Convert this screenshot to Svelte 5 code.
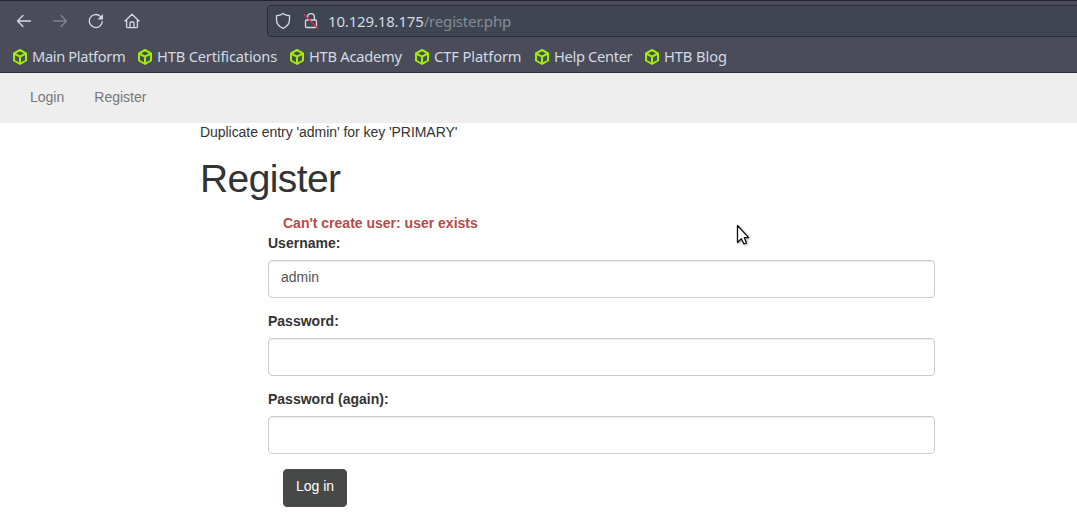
<script>
  const bookmarks = [
    { label: 'Main Platform', width: 125, tracking: -0.36 },
    { label: 'HTB Certifications', width: 152, tracking: -0.17 },
    { label: 'HTB Academy', width: 125, tracking: -0.25 },
    { label: 'CTF Platform', width: 120, tracking: -0.1 },
    { label: 'Help Center', width: 110, tracking: -0.33 },
    { label: 'HTB Blog', width: 90, tracking: -0.08 }
  ];
  let username = $state('admin');
  let password = $state('');
  let repeated = $state('');
</script>

<div class="screen">
  <header class="chrome">
    <div class="toolbar">
      <div class="buttons">
        <svg width="16" height="16" viewBox="0 0 16 16"><path d="M1.5 8H14.5M7 2.500 1.500 8 7 13.500" /></svg>
        <svg class="dim" width="16" height="16" viewBox="0 0 16 16"><path d="M1.500 8h13M9 2.500 14.500 8 9 13.500" /></svg>
        <svg width="16" height="16" viewBox="0 0 16 16"><path d="M14.3 8.6A6.5 6.5 0 1 1 12.4 3.4" /><path class="solid" d="M15 1v5.4H9.6z" /></svg>
        <svg width="16" height="16" viewBox="0 0 16 16"><path d="M1 8 8 1.2 15 8M2.600 6.800v6.700q0 1.200 1.200 1.200h8.400q1.200 0 1.200-1.200V6.800M6 14.500V10q0-1 1-1h2q1 0 1 1v4.500" /></svg>
      </div>
      <div class="address">
        <svg width="16" height="18" viewBox="0 0 16 18"><path d="M8 1.400C6 3 3.800 3.600 1.500 3.700V7.500C1.500 11.800 4 14.700 8 16.300C12 14.700 14.500 11.800 14.500 7.500V3.700C12.200 3.600 10 3 8 1.400Z" /></svg>
        <svg class="lock" width="16" height="18" viewBox="0 0 16 18"><path d="M4.600 8V5a3.400 3.400 0 0 1 6.800 0v3M3.500 8h9q1 0 1 1v5.500q0 1-1 1h-9q-1 0-1-1V9q0-1 1-1Z" /><path class="slash" d="M1 2.500 14.500 16" /></svg>
        <span class="url">10.129.18.175<span>/register.php</span></span>
      </div>
    </div>
    <div class="bookmarks">
      {#each bookmarks as item}
        <div class="bookmark" style:width="{item.width}px">
          <svg width="16" height="18" viewBox="0 0 16 18"><path d="M8 2 14 5.300V12.500L8 16 2 12.500V5.300ZM2.200 5.500 8 8.700 13.800 5.500M8 8.700V15.800" /></svg>
          <span style:letter-spacing="{item.tracking}px">{item.label}</span>
        </div>
      {/each}
    </div>
  </header>

  <nav><span class="login">Login</span><span class="reg">Register</span></nav>

  <main>
    <p class="notice">Duplicate entry 'admin' for key 'PRIMARY'</p>
    <h1>Register</h1>
    <form onsubmit={(e) => e.preventDefault()}>
      <p class="error">Can't create user: user exists</p>
      <label for="user">Username:</label>
      <input id="user" type="text" bind:value={username} />
      <label for="pass">Password:</label>
      <input id="pass" type="password" bind:value={password} />
      <label for="again">Password (again):</label>
      <input id="again" type="password" bind:value={repeated} />
      <button type="submit">Log in</button>
    </form>
  </main>

  <svg class="pointer" width="16" height="24" viewBox="0 0 16 24"><path d="M1.500 1.500V18.500L5.300 14.800 8 20 10.500 18.900 8.200 13.600H12.700Z" /></svg>
</div>

<style>
  :global(body) { background: #fff; overflow: hidden; }
  .screen { position: relative; height: 523px; overflow: hidden; font: 14px/20px "Liberation Sans", Arial, sans-serif; color: #333; }
  .chrome { box-sizing: border-box; height: 73px; background: #4a4d59; border-top: 1px solid #22252e; border-bottom: 1px solid #292c38; font-family: "Noto Sans", sans-serif; color: #d3dae3; }
  svg { display: block; flex: none; fill: none; stroke: #d3dae3; stroke-width: 1.3; stroke-linecap: round; stroke-linejoin: round; }
  .toolbar { display: flex; height: 40px; }
  .buttons { display: flex; flex: none; align-items: center; gap: 20px; width: 251px; padding-left: 16px; }
  .dim { opacity: .38; }
  .solid { fill: #d3dae3; stroke: none; }
  .address { box-sizing: border-box; display: flex; align-items: center; height: 32px; width: 820px; flex: none; margin-top: 4px; padding-left: 7px; background: #404552; border: 1px solid #2b2e39; border-radius: 4px; }
  .lock { margin-left: 12px; }
  .slash { stroke: #e22850; }
  .url { margin-left: 9px; font-size: 15px; letter-spacing: -.17px; white-space: nowrap; }
  .url span { color: #858c99; }
  .bookmarks { display: flex; height: 31px; padding-left: 12px; }
  .bookmark { display: flex; align-items: center; flex: none; gap: 4px; font-size: 14.67px; white-space: nowrap; }
  .bookmark svg { stroke: #9fef00; stroke-width: 2; }
  .bookmark span { margin-bottom: 2px; }
  nav { display: flex; height: 50px; box-sizing: border-box; padding: 14px 30px; gap: 30px; background: #eee; color: #777; }
  main { width: 735px; margin-left: 200px; }
  p { margin: 0; }
  .notice { height: 20px; line-height: 19px; letter-spacing: -.05px; white-space: nowrap; }
  h1 { margin: 14px 0 13px; font-weight: 400; font-size: 39px; line-height: 43px; letter-spacing: -.6px; }
  form { display: flex; flex-direction: column; margin-left: 68px; }
  .error { padding-left: 15px; color: #b94a48; font-weight: 700; }
  label { height: 20px; margin-bottom: 7px; font-weight: 700; }
  input { box-sizing: border-box; width: 667px; height: 38px; margin: 0 0 13px; padding: 6px 12px 10px; border: 1px solid #ccc; border-radius: 4px; background: #fff; box-shadow: inset 0 1px 1px rgba(0,0,0,.075); font: inherit; color: #555; outline: 0; }
  button { align-self: flex-start; width: 64px; height: 38px; margin: 2px 0 0 15px; padding: 0 0 4px; border: 1px solid #474949; border-radius: 4px; background: #474949; color: #fff; font: inherit; white-space: nowrap; }
  .pointer { position: absolute; left: 736px; top: 224px; fill: #fff; stroke: #111; stroke-width: 1.3; filter: drop-shadow(1px 1px 1px rgba(0,0,0,.3)); }
</style>
